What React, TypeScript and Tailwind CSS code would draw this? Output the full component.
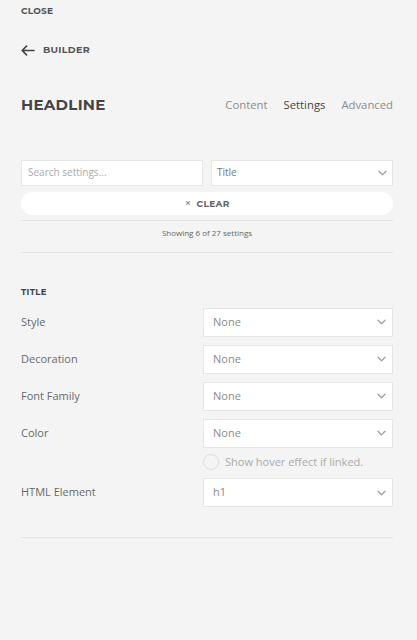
import React from "react";

const Chevron = () => (
  <svg width="9" height="6" viewBox="0 0 9 6" className="shrink-0">
    <path d="M1 1.2l3.5 3.5L8 1.2" fill="none" stroke="#a0a0a0" strokeWidth="1.3" strokeLinecap="round" strokeLinejoin="round" />
  </svg>
);

const Select = ({ value }: { value: string }) => (
  <div className="flex h-[29px] w-full items-center justify-between border border-[#e6e6e6] bg-white pl-[9px] pr-[6px] text-[11px] text-[#8a8a8a]">
    <span>{value}</span>
    <Chevron />
  </div>
);

const Row = ({ label, value }: { label: string; value: string }) => (
  <div className="flex items-center">
    <div className="w-[182px] text-[11px] text-[#6a6a6a]">{label}</div>
    <div className="flex-1">
      <Select value={value} />
    </div>
  </div>
);

export default function App() {
  const head = { fontFamily: '"Montserrat", "Open Sans", sans-serif' };
  return (
    <div
      className="min-h-[640px] w-[417px] bg-[#f4f4f4] pl-[21px] pr-[24px] pb-10 text-[#555]"
      style={{ fontFamily: '"Open Sans", sans-serif' }}
    >
      <div className="pt-[5px] text-[9px] font-bold leading-[12px] tracking-[0.2px] text-[#555]" style={head}>
        CLOSE
      </div>
      <div className="mt-[26px] flex items-center gap-[8px]">
        <svg width="14" height="11" viewBox="0 0 14 11">
          <path d="M13 5.5H1.5M5.5 1.2L1.2 5.5l4.3 4.3" fill="none" stroke="#444" strokeWidth="1.7" strokeLinecap="round" strokeLinejoin="round" />
        </svg>
        <span className="text-[9.5px] font-bold tracking-[0.3px] text-[#555]" style={head}>
          BUILDER
        </span>
      </div>
      <div className="mt-[37px] flex items-center justify-between">
        <div className="text-[15px] font-bold tracking-[0.3px] text-[#444]" style={head}>
          HEADLINE
        </div>
        <div className="flex gap-[16px] text-[11.3px]">
          <span className="text-[#8c8c8c]">Content</span>
          <span className="text-[#444]">Settings</span>
          <span className="text-[#8c8c8c]">Advanced</span>
        </div>
      </div>

      <div className="mt-[43px] flex gap-[8px]">
        <div className="flex h-[26px] w-[182px] items-center border border-[#e6e6e6] bg-white px-[6px] text-[10px] text-[#aaa]">
          Search settings...
        </div>
        <div className="flex-1">
          <div className="flex h-[26px] w-full items-center justify-between border border-[#e6e6e6] bg-white pl-[5px] pr-[5px] text-[10px] text-[#777]">
            <span>Title</span>
            <Chevron />
          </div>
        </div>
      </div>
      <div
        className="mt-[6px] flex h-[23px] items-center justify-center gap-[5px] rounded-full bg-white text-[9px] font-bold tracking-[0.3px] text-[#666]"
        style={head}
      >
        <span className="text-[12px] font-normal leading-none">×</span>
        <span>CLEAR</span>
      </div>
      <div className="mt-[5px] border-t border-[#e4e4e4]" />
      <div className="pt-[5px] text-center text-[8px] leading-[14px] text-[#666]">Showing 6 of 27 settings</div>
      <div className="mt-[12px] border-t border-[#e4e4e4]" />

      <div className="mt-[33px] text-[8.5px] font-bold tracking-[0.3px] text-[#444]" style={head}>
        TITLE
      </div>
      <div className="mt-[9px] flex flex-col gap-[8px]">
        <Row label="Style" value="None" />
        <Row label="Decoration" value="None" />
        <Row label="Font Family" value="None" />
        <Row label="Color" value="None" />
      </div>
      <div className="mt-[6px] flex items-center gap-[6px] pl-[182px]">
        <div className="h-[16px] w-[16px] rounded-full border border-[#ddd] bg-[#f4f4f4]" />
        <span className="text-[11px] text-[#aaa]">Show hover effect if linked.</span>
      </div>
      <div className="mt-[8px]">
        <Row label="HTML Element" value="h1" />
      </div>
      <div className="mt-[30px] border-t border-[#e4e4e4]" />
    </div>
  );
}
